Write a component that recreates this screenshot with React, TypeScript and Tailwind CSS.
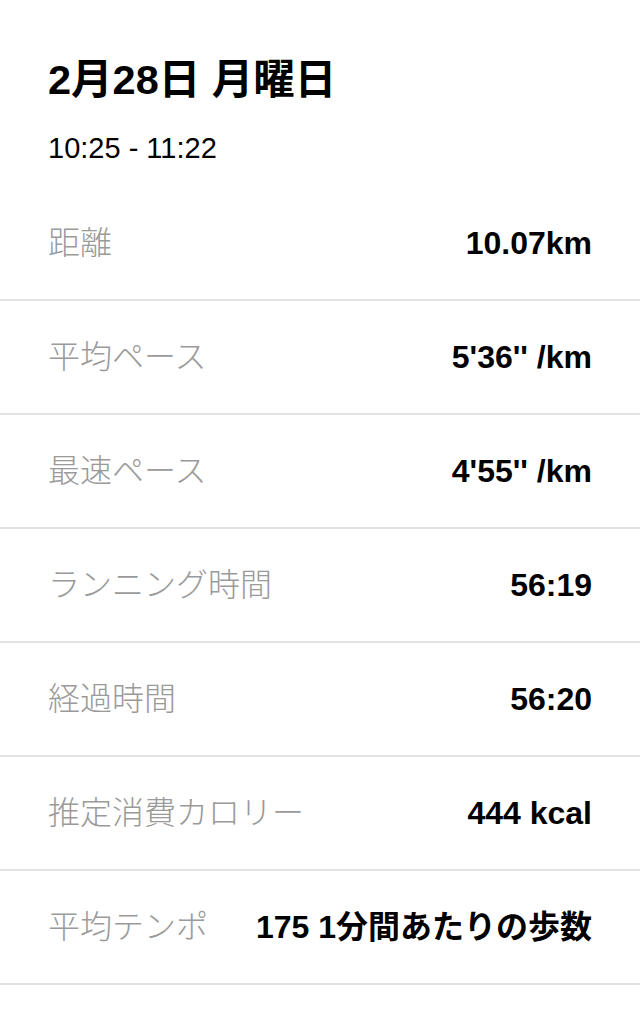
import React from "react";

// Workout summary rows
const rows = [
  { label: "距離", value: "10.07km" },
  { label: "平均ペース", value: "5'36'' /km" },
  { label: "最速ペース", value: "4'55'' /km" },
  { label: "ランニング時間", value: "56:19" },
  { label: "経過時間", value: "56:20" },
  { label: "推定消費カロリー", value: "444 kcal" },
  { label: "平均テンポ", value: "175 1分間あたりの歩数" },
];

const font = "font-['Liberation_Sans','Noto_Sans_CJK_JP',sans-serif]";

export default function App() {
  return (
    <div className={`w-[640px] bg-white text-black ${font}`}>
      <div className="px-12">
        <h1 className="pt-[56px] text-[41.5px] leading-[48px] font-bold">
          2月28日 月曜日
        </h1>
        <p className="mt-[27px] text-[29px] leading-[34px]">10:25 - 11:22</p>
      </div>
      <div className="mt-[22px]">
        {rows.map((row) => (
          <div
            key={row.label}
            className="h-[114px] border-b-2 border-[#e2e2e2] px-12 flex items-center justify-between"
          >
            <span className="text-[32px] leading-[38px] font-light text-[#9a9a9a]">
              {row.label}
            </span>
            <span className="text-[32px] leading-[38px] font-bold">
              {row.value}
            </span>
          </div>
        ))}
      </div>
    </div>
  );
}
